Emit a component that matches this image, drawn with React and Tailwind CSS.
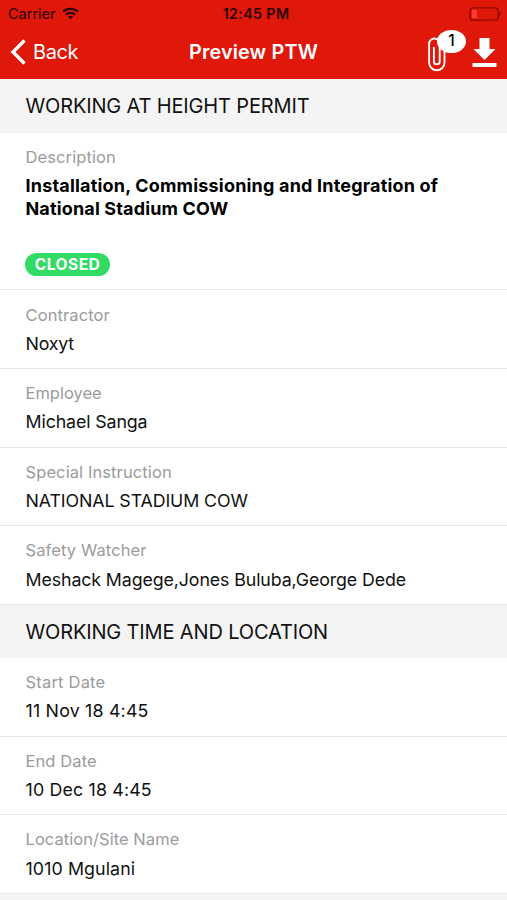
const workFields = [
  { label: 'Contractor', value: 'Noxyt', labelStyle: 'tracking-[0.1px]', valueStyle: 'tracking-[-0.2px]' },
  { label: 'Employee', value: 'Michael Sanga', labelStyle: 'tracking-[0px]', valueStyle: 'tracking-[-0.12px]' },
  { label: 'Special Instruction', value: 'NATIONAL STADIUM COW', labelStyle: 'tracking-[0.1px]', valueStyle: 'tracking-[-0.1px]' },
  { label: 'Safety Watcher', value: 'Meshack Magege,Jones Buluba,George Dede', labelStyle: 'tracking-[0.1px]', valueStyle: 'tracking-[-0.11px]' },
];

const timeFields = [
  { label: 'Start Date', value: '11 Nov 18 4:45', labelStyle: 'tracking-[0.2px]', valueStyle: 'tracking-[0.2px]' },
  { label: 'End Date', value: '10 Dec 18 4:45', labelStyle: 'tracking-[0.1px]', valueStyle: 'tracking-[0.17px]' },
  { label: 'Location/Site Name', value: '1010 Mgulani', labelStyle: 'tracking-[0.05px]', valueStyle: 'tracking-[0.1px]' },
];

function Field({ label, value, labelStyle, valueStyle }) {
  return (
    <div className="h-[78.6px] border-b border-[#e6e6e6] pl-[25.5px] pt-[11.3px]">
      <div className="text-[16.5px] leading-[26px] text-[#9b9b9b]">
        <span className={labelStyle}>{label}</span>
      </div>
      <div className="mt-[2.2px] text-[17.8px] leading-[28px] text-[#111]">
        <span className={valueStyle}>{value}</span>
      </div>
    </div>
  );
}

function Heading({ children, className }) {
  return (
    <h2 className={`shrink-0 bg-[#f4f4f4] pl-[25.5px] text-[20px] font-normal text-[#111] ${className}`}>
      <span className="tracking-[-0.15px]">{children}</span>
    </h2>
  );
}

function WifiIcon() {
  return (
    <svg width="17" height="13" viewBox="0 0 17 13" className="ml-[6px]" fill="none" stroke="#2a0200" strokeWidth="2.2">
      <path d="M1.2 4.6C5.2.8 11.8.8 15.8 4.6" />
      <path d="M4 7.6C6.5 5.3 10.5 5.3 13 7.6" />
      <path d="M8.5 12.3 5.9 9.6C7.3 8.3 9.7 8.3 11.1 9.6Z" fill="#2a0200" stroke="none" />
    </svg>
  );
}

export default function App() {
  return (
    <div className="flex h-[900px] w-[507px] flex-col overflow-hidden bg-white font-['Inter',sans-serif] text-black">
      <header className="h-[79px] shrink-0 bg-[#df180a]">
        <div className="grid h-[27px] grid-cols-[1fr_auto_1fr] items-center pl-2 pr-[5px] text-[#2a0200]">
          <div className="flex items-center text-[14.5px]">
            <span>Carrier</span>
            <WifiIcon />
          </div>
          <div className="pl-[2px] text-[14.2px] font-semibold tracking-[0.4px]">12:45 PM</div>
          <svg width="33" height="14" viewBox="0 0 33 14" className="justify-self-end">
            <rect x="1" y=".8" width="28" height="12.4" rx="2.5" fill="none" stroke="#8b0a03" strokeWidth="1.2" />
            <rect x="3" y="2.8" width="5" height="8.4" rx=".6" fill="#ff3b30" />
            <path d="M30.2 4.6c2 .8 2 4 0 4.8Z" fill="#8b0a03" />
          </svg>
        </div>
        <div className="grid h-[50px] grid-cols-[1fr_auto_1fr] items-center pl-[10px] pr-[10px] text-white">
          <div className="flex items-center text-[20px]">
            <svg width="17" height="26" viewBox="0 0 17 26" fill="none" stroke="#fff" strokeWidth="3.4">
              <path d="M14.5 1.5 3 13 14.5 24.5" />
            </svg>
            <span className="ml-[6px] tracking-[-0.4px]">Back</span>
          </div>
          <h1 className="pt-[2px] text-[19.8px] font-semibold tracking-[0.15px]">Preview PTW</h1>
          <div className="relative flex h-full justify-end">
            <svg width="20" height="36" viewBox="0 0 20 36" className="mr-[25px] mt-[9px]" fill="none" stroke="#fff" strokeWidth="1.9">
              <path d="M17.5 10v16.6a7.7 7.7 0 0 1-15.4 0V7.8a5.3 5.3 0 0 1 10.6 0v17.6a2.9 2.9 0 0 1-5.8 0V11" />
            </svg>
            <div className="absolute right-[31px] top-[2.6px] flex h-[23px] w-[29px] items-center justify-center rounded-[50%] bg-white text-[15.5px] font-medium text-black">1</div>
            <svg width="25" height="30" viewBox="0 0 25 30" className="mt-[10px]" fill="#fff">
              <path d="M7.5 1h10v11h6L12.5 23 1.5 12h6Z" />
              <path d="M.5 26h24v4H.5Z" />
            </svg>
          </div>
        </div>
      </header>
      <main className="flex-1">
        <Heading className="h-[54px] leading-[54px]">WORKING AT HEIGHT PERMIT</Heading>
        <section className="h-[157.4px] border-b border-[#e6e6e6] pl-[25.5px] pt-[11px]">
          <div className="text-[16.5px] leading-[26px] text-[#9b9b9b]">
            <span className="tracking-[0.1px]">Description</span>
          </div>
          <div className="mt-[4px] text-[18px] font-bold leading-[23px]">
            <div className="tracking-[0.19px]">Installation, Commissioning and Integration of</div>
            <div className="tracking-[0.15px]">National Stadium COW</div>
          </div>
          <div className="-ml-[0.5px] mt-[33px] flex h-[23px] w-[85px] items-center justify-center rounded-full bg-[#32db64] pt-px text-[15.5px] font-bold tracking-[0.5px] text-white">
            <span>CLOSED</span>
          </div>
        </section>
        {workFields.map((field) => <Field key={field.label} {...field} />)}
        <Heading className="h-[53.2px] leading-[54px]">WORKING TIME AND LOCATION</Heading>
        {timeFields.map((field) => <Field key={field.label} {...field} />)}
        <div className="h-[54px] bg-[#f4f4f4]" />
      </main>
    </div>
  );
}
